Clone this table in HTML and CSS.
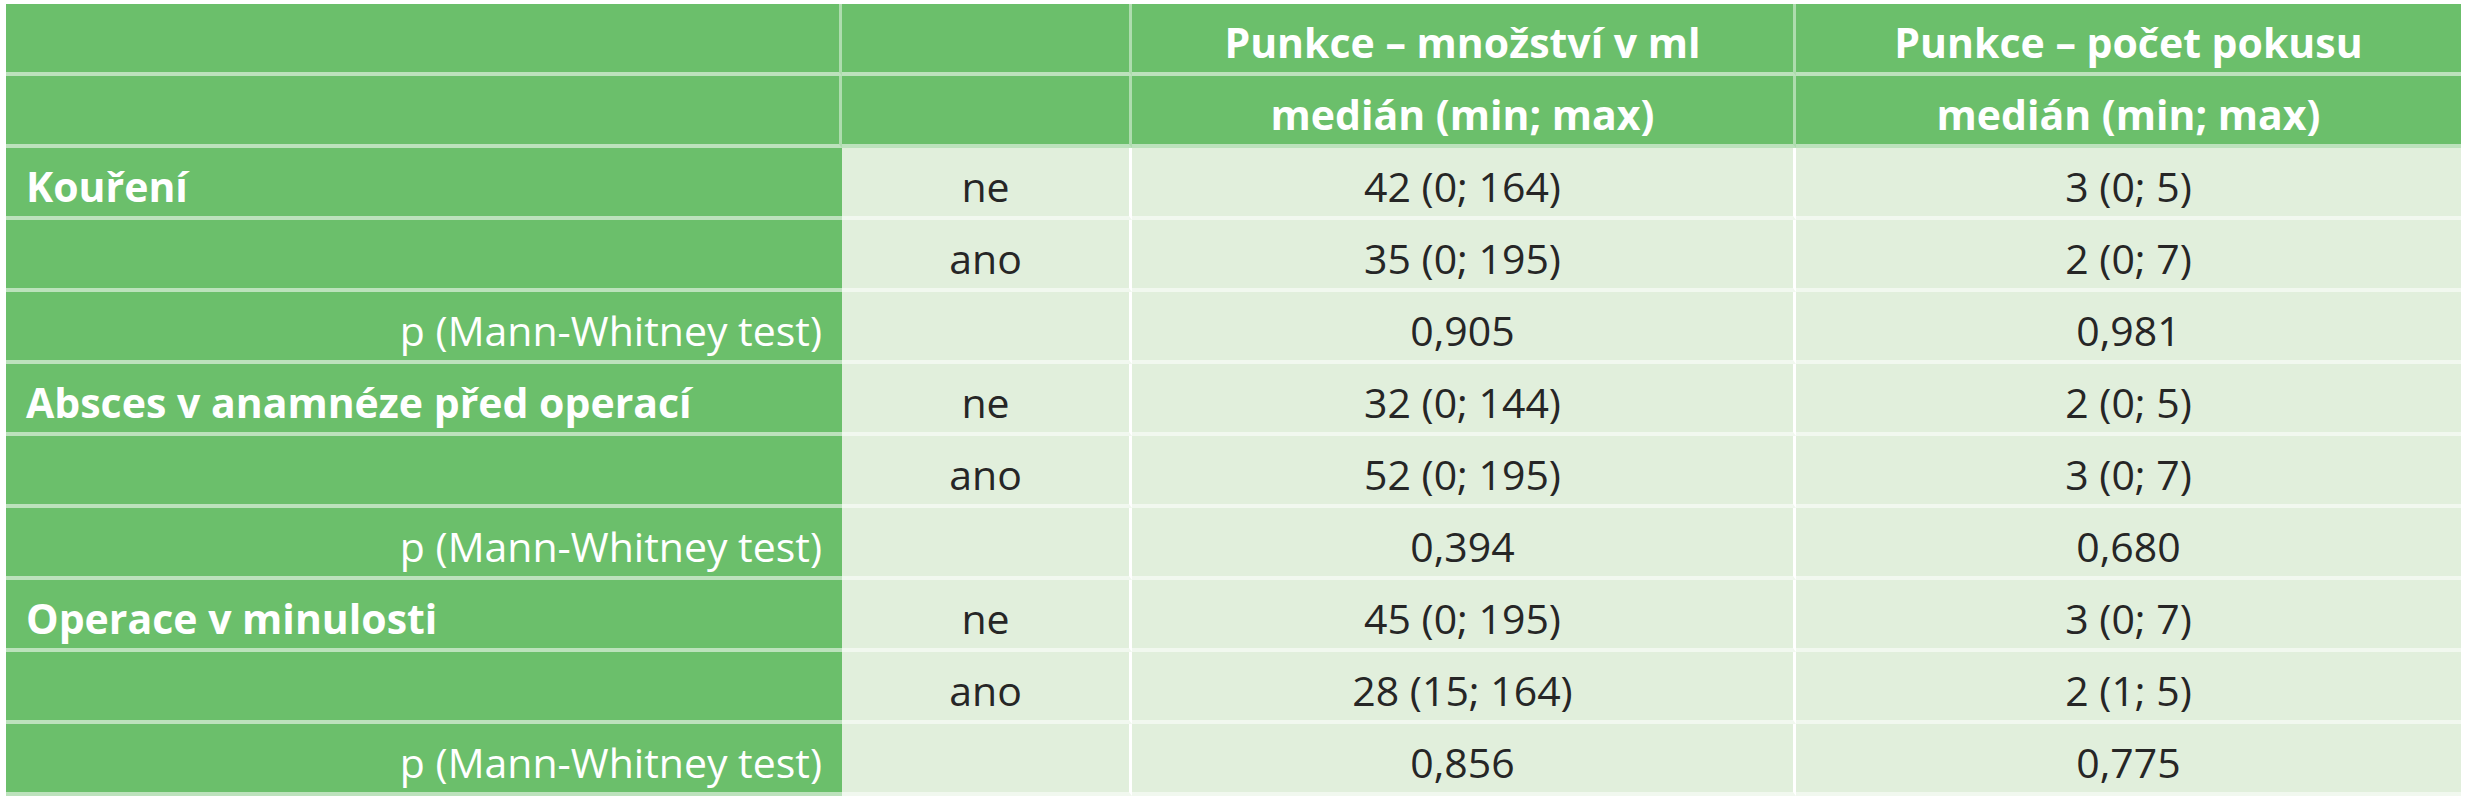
FILE: index.html
```html
<!DOCTYPE html>
<html lang="cs">
<head>
<meta charset="utf-8">
<title>Punkce</title>
<link rel="stylesheet" href="styles.css">
</head>
<body>
<table class="data">
  <colgroup>
    <col class="c1"><col class="c2"><col class="c3"><col class="c4">
  </colgroup>
  <thead>
    <tr><th></th><th></th><th>Punkce – množství v ml</th><th>Punkce – počet pokusu</th></tr>
    <tr><th></th><th></th><th>medián (min; max)</th><th>medián (min; max)</th></tr>
  </thead>
  <tbody>
    <tr><th class="group">Kouření</th><td>ne</td><td>42 (0; 164)</td><td>3 (0; 5)</td></tr>
    <tr><th class="group"></th><td>ano</td><td>35 (0; 195)</td><td>2 (0; 7)</td></tr>
    <tr><th class="pval">p (Mann-Whitney test)</th><td></td><td>0,905</td><td>0,981</td></tr>
    <tr><th class="group">Absces v anamnéze před operací</th><td>ne</td><td>32 (0; 144)</td><td>2 (0; 5)</td></tr>
    <tr><th class="group"></th><td>ano</td><td>52 (0; 195)</td><td>3 (0; 7)</td></tr>
    <tr><th class="pval">p (Mann-Whitney test)</th><td></td><td>0,394</td><td>0,680</td></tr>
    <tr><th class="group">Operace v minulosti</th><td>ne</td><td>45 (0; 195)</td><td>3 (0; 7)</td></tr>
    <tr><th class="group"></th><td>ano</td><td>28 (15; 164)</td><td>2 (1; 5)</td></tr>
    <tr><th class="pval">p (Mann-Whitney test)</th><td></td><td>0,856</td><td>0,775</td></tr>
  </tbody>
</table>
</body>
</html>
```

FILE: styles.css
```css
html, body {
  margin: 0;
  padding: 0;
  background: #ffffff;
}

body {
  padding: 4px 0 0 6px;
  font-family: "Open Sans", "Liberation Sans", sans-serif;
}

.data {
  border-collapse: separate;
  border-spacing: 0;
  table-layout: fixed;
  width: 2455px;
}

.c1 { width: 836px; }
.c2 { width: 290px; }
.c3 { width: 664px; }
.c4 { width: 665px; }

.data tr {
  height: 72px;
}

.data th,
.data td {
  padding: 8px 20px 0;
  font-size: 41px;
  line-height: 1;
  border-bottom: 4px solid rgba(255, 255, 255, 0.55);
  white-space: nowrap;
}

.data thead th {
  background: #6bbf6b;
  color: #ffffff;
  font-weight: 700;
  text-align: center;
  border-right: 3px solid rgba(255, 255, 255, 0.45);
}

.data thead th:last-child {
  border-right: none;
}

.data tbody th {
  background: #6bbf6b;
  color: #ffffff;
  text-align: left;
}

.data tbody th.group {
  font-weight: 700;
}

.data tbody th.pval {
  font-weight: 400;
  text-align: right;
}

.data tbody td {
  background: #e1efdc;
  color: #262626;
  text-align: center;
  border-right: 3px solid #ffffff;
}

.data tbody td:last-child {
  border-right: none;
}
```
